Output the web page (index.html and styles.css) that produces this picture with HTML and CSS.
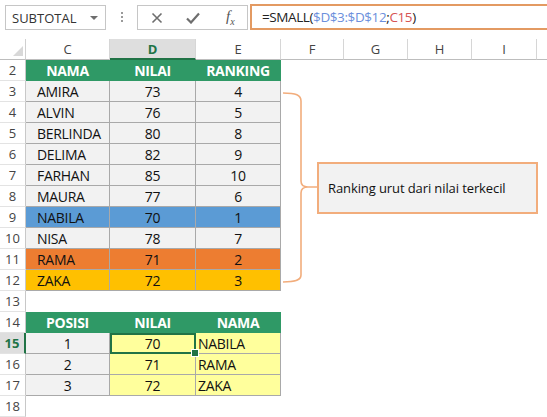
FILE: index.html
```html
<!DOCTYPE html>
<html>
<head>
<meta charset="utf-8">
<link rel="stylesheet" href="styles.css">
</head>
<body>
<div class="app">
  <div class="toolbar">
    <div class="namebox"><span class="nb-text">SUBTOTAL</span><span class="caret"></span></div>
    <div class="grip"><i></i><i></i><i></i></div>
    <div class="fxbox">
      <svg class="ico" width="12" height="12" viewBox="0 0 12 12"><path d="M1.5 1.5 L10.5 10.5 M10.5 1.5 L1.5 10.5" stroke="#6e6e6e" stroke-width="1.6" fill="none"/></svg>
      <svg class="ico" width="14" height="12" viewBox="0 0 14 12"><path d="M1 6.5 L5 10.5 L13 1.5" stroke="#6e6e6e" stroke-width="2.2" fill="none"/></svg>
      <span class="fx">f<sub>x</sub></span>
    </div>
    <div class="formula">=SMALL(<span class="ref">$D$3:$D$12</span>;<span class="ref2">C15</span>)</div>
  </div>

  <div class="sheet">
    <div class="row colhead">
      <div class="corner"><span class="tri"></span></div>
      <div class="ch">C</div><div class="ch sel">D</div><div class="ch">E</div>
      <div class="ch">F</div><div class="ch">G</div><div class="ch">H</div><div class="ch">I</div><div class="ch last"></div>
    </div>

    <div class="row"><div class="rh">2</div><div class="c hd">NAMA</div><div class="c hd">NILAI</div><div class="c hd">RANKING</div></div>
    <div class="row"><div class="rh">3</div><div class="c g name">AMIRA</div><div class="c g">73</div><div class="c g">4</div></div>
    <div class="row"><div class="rh">4</div><div class="c g name">ALVIN</div><div class="c g">76</div><div class="c g">5</div></div>
    <div class="row"><div class="rh">5</div><div class="c g name">BERLINDA</div><div class="c g">80</div><div class="c g">8</div></div>
    <div class="row"><div class="rh">6</div><div class="c g name">DELIMA</div><div class="c g">82</div><div class="c g">9</div></div>
    <div class="row"><div class="rh">7</div><div class="c g name">FARHAN</div><div class="c g">85</div><div class="c g">10</div></div>
    <div class="row"><div class="rh">8</div><div class="c g name">MAURA</div><div class="c g">77</div><div class="c g">6</div></div>
    <div class="row"><div class="rh">9</div><div class="c blue name">NABILA</div><div class="c blue">70</div><div class="c blue">1</div></div>
    <div class="row"><div class="rh">10</div><div class="c g name">NISA</div><div class="c g">78</div><div class="c g">7</div></div>
    <div class="row"><div class="rh">11</div><div class="c orange name">RAMA</div><div class="c orange">71</div><div class="c orange">2</div></div>
    <div class="row"><div class="rh">12</div><div class="c gold name">ZAKA</div><div class="c gold">72</div><div class="c gold">3</div></div>
    <div class="row"><div class="rh">13</div></div>
    <div class="row"><div class="rh">14</div><div class="c hd">POSISI</div><div class="c hd">NILAI</div><div class="c hd">NAMA</div></div>
    <div class="row"><div class="rh sel">15</div><div class="c g">1</div><div class="c y active">70</div><div class="c y left">NABILA</div></div>
    <div class="row"><div class="rh">16</div><div class="c g">2</div><div class="c y">71</div><div class="c y left">RAMA</div></div>
    <div class="row"><div class="rh">17</div><div class="c g">3</div><div class="c y">72</div><div class="c y left">ZAKA</div></div>
    <div class="row"><div class="rh">18</div></div>

    <svg class="brace" width="547" height="300" viewBox="0 0 547 300">
      <path d="M283 54 C296 54 301 56 301 62 L301 142 C301 146 303 148 308 148 L317 148 M308 148 C303 148 301 150 301 154 L301 236 C301 241 296 243 283 243" stroke="#f2ad7c" stroke-width="1.6" fill="none"/>
    </svg>
    <div class="callout">Ranking urut dari nilai terkecil</div>
  </div>
</div>
</body>
</html>
```

FILE: styles.css
```css
* { box-sizing: border-box; }
html, body { margin: 0; padding: 0; background: #fff; }
body { width: 547px; height: 417px; overflow: hidden; font-family: "Open Sans", "Liberation Sans", sans-serif; }

.app { width: 547px; height: 417px; overflow: hidden; }

.toolbar {
  height: 39px;
  display: flex;
  align-items: flex-start;
  padding-top: 4px;
  padding-left: 5px;
}
.namebox {
  margin-top: 1px;
  width: 101px;
  height: 25px;
  border: 1px solid #c6c6c6;
  display: flex;
  align-items: center;
  justify-content: space-between;
  padding: 0 6px 0 6px;
  font-size: 13px;
  color: #333;
}
.caret {
  width: 0; height: 0;
  border-left: 4px solid transparent;
  border-right: 4px solid transparent;
  border-top: 4px solid #6e6e6e;
  margin-right: 1px;
}
.grip {
  width: 31px;
  height: 26px;
  display: flex;
  flex-direction: column;
  align-items: center;
  justify-content: center;
  gap: 2px;
}
.grip i { display: block; width: 2px; height: 2px; background: #9a9a9a; }
.fxbox {
  margin-top: 1px;
  width: 111px;
  height: 25px;
  border: 1px solid #c6c6c6;
  display: flex;
  align-items: center;
  padding-left: 13px;
  gap: 23px;
}
.fx {
  font-family: "Liberation Serif", serif;
  font-style: italic;
  font-size: 15px;
  color: #555;
  margin-left: 3px;
}
.fx sub { font-size: 10px; }
.formula {
  flex: 1;
  height: 26px;
  margin-left: 2px;
  border: 2px solid #e39a62;
  border-right: none;
  font-family: "Open Sans", sans-serif;
  font-size: 13.5px;
  letter-spacing: -0.4px;
  color: #222;
  display: flex;
  align-items: center;
  padding-left: 10px;
  white-space: pre;
}
.ref { color: #6c8fdc; }
.ref2 { color: #d65454; }

.sheet { position: relative; }
.row {
  display: grid;
  grid-template-columns: 26px 84px 86px 85px 63px 64px 64px 65px 1fr;
  height: 21px;
  font-family: "Open Sans", sans-serif;
  font-size: 14px;
  letter-spacing: -0.3px;
  color: #111;
}
.corner {
  position: relative;
  border-right: 1px solid #d0d0d0;
  border-bottom: 1px solid #bdbdbd;
}
.tri {
  position: absolute;
  right: 2px; bottom: 3px;
  width: 0; height: 0;
  border-left: 10px solid transparent;
  border-bottom: 10px solid #d8d8d8;
}
.ch {
  border-right: 1px solid #d6d6d6;
  border-bottom: 1px solid #bdbdbd;
  display: flex; align-items: center; justify-content: center;
  font-size: 13px;
  letter-spacing: 0;
  color: #444;
}
.ch.last { border-right: none; }
.ch.sel {
  background: #dedede;
  border-bottom: 2px solid #217346;
  color: #217346;
  font-weight: bold;
}
.rh {
  border-right: 1px solid #c8c8c8;
  border-bottom: 1px solid #e3e3e3;
  display: flex; align-items: center; justify-content: center;
  font-size: 13px;
  letter-spacing: 0;
  color: #444;
}
.rh.sel {
  background: #dedede;
  border-right: 2px solid #217346;
  color: #217346;
  font-weight: bold;
}
.c {
  display: flex; align-items: center; justify-content: center;
  border-right: 1px solid #a9a9a9;
  border-bottom: 1px solid #a9a9a9;
  white-space: nowrap;
}
.c.name { justify-content: flex-start; padding-left: 11px; }
.c.left { justify-content: flex-start; padding-left: 2px; }
.c.hd {
  background: #2f9966;
  color: #fff;
  font-weight: bold;
  border-right-color: #2f9966;
  border-bottom-color: #2f9966;
}
.c.g { background: #f2f2f2; }
.c.blue { background: #5b9bd5; }
.c.orange { background: #ed7d31; }
.c.gold { background: #ffc000; }
.c.y { background: #ffff9c; }
.c.active {
  position: relative;
  outline: 2px solid #217346;
  outline-offset: -2px;
  border-right-color: #217346;
}
.c.active::after {
  content: "";
  position: absolute;
  right: -4px; bottom: -4px;
  width: 6px; height: 6px;
  background: #217346;
  border: 1px solid #fff;
}
.brace {
  position: absolute;
  left: 0; top: 0;
  pointer-events: none;
}
.callout {
  position: absolute;
  left: 317px; top: 123px;
  width: 221px; height: 52px;
  background: #f2f2f2;
  border: 2px solid #f2ad7c;
  display: flex; align-items: center;
  padding-left: 9px;
  font-family: "Open Sans", sans-serif;
  font-size: 13px;
  letter-spacing: -0.1px;
  color: #111;
}
```
